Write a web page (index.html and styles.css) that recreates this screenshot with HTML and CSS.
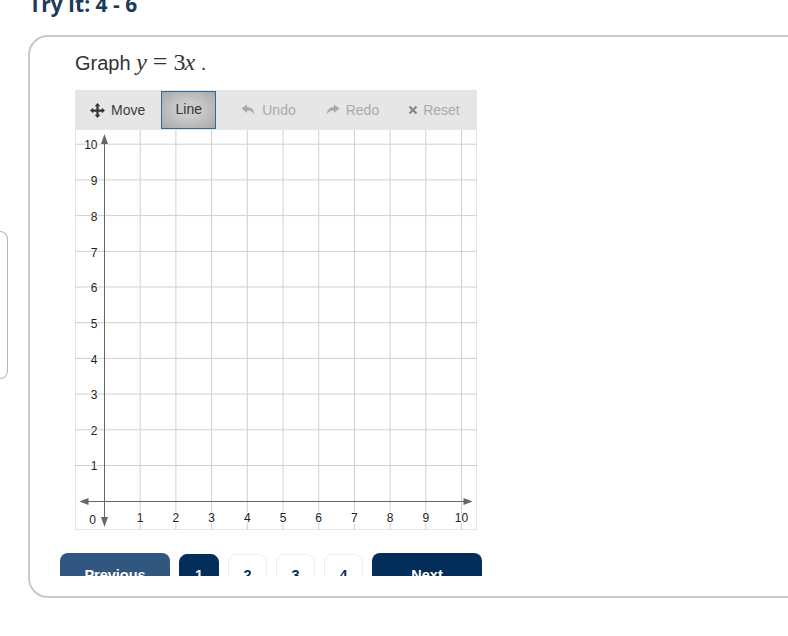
FILE: index.html
```html
<!DOCTYPE html>
<html lang="en">
<head>
<meta charset="utf-8">
<title>Try It: 4 - 6</title>
<link rel="stylesheet" href="styles.css">
</head>
<body>
<h1 class="title">Try It: 4 - 6</h1>
<div class="layout">
  <div class="side-tab"></div>
  <section class="card">
    <p class="prompt">Graph <span class="math"><i>y</i><span class="eq">=</span><span class="three">3</span><i>x</i></span> .</p>
    <div class="toolbar">
      <button class="tool tool-move">
        <svg class="icon" width="15" height="15" viewBox="0 0 16 16"><path d="M8 0 11 3.4H9.2V6.8H12.6V5L16 8 12.6 11V9.2H9.2V12.6H11L8 16 5 12.6H6.8V9.2H3.4V11L0 8 3.4 5V6.8H6.8V3.4H5Z" fill="#333"/></svg>
        Move
      </button>
      <button class="tool tool-line">Line</button>
      <button class="tool tool-undo">
        <svg class="icon" width="14" height="12" viewBox="0 0 14 12"><path d="M0.5 4.5 6 0.5V3C10.5 3 13 6 13.5 10.5 11.8 7.8 9.5 6.6 6 6.6V9Z" fill="#aaa"/></svg>
        Undo
      </button>
      <button class="tool tool-redo">
        <svg class="icon" width="14" height="12" viewBox="0 0 14 12"><path d="M13.5 4.5 8 0.5V3C3.5 3 1 6 0.5 10.5 2.2 7.8 4.5 6.6 8 6.6V9Z" fill="#aaa"/></svg>
        Redo
      </button>
      <button class="tool tool-reset">
        <svg class="icon" width="10" height="10" viewBox="0 0 10 10"><path d="M1.5 1.5 8.5 8.5M8.5 1.5 1.5 8.5" stroke="#888" stroke-width="2.2" fill="none"/></svg>
        Reset
      </button>
    </div>
    <svg class="graph" width="402" height="400" viewBox="0 0 402 400">
      <rect x="0.5" y="-1" width="401" height="400.5" fill="#fff" stroke="#e6e6e6"/>
      <g class="grid">
        <line x1="65.2" y1="0" x2="65.2" y2="400"/><line x1="100.9" y1="0" x2="100.9" y2="400"/><line x1="136.6" y1="0" x2="136.6" y2="400"/><line x1="172.3" y1="0" x2="172.3" y2="400"/><line x1="208" y1="0" x2="208" y2="400"/><line x1="243.7" y1="0" x2="243.7" y2="400"/><line x1="279.4" y1="0" x2="279.4" y2="400"/><line x1="315.1" y1="0" x2="315.1" y2="400"/><line x1="350.8" y1="0" x2="350.8" y2="400"/><line x1="386.5" y1="0" x2="386.5" y2="400"/>
        <line x1="0" y1="335.5" x2="402" y2="335.5"/><line x1="0" y1="299.8" x2="402" y2="299.8"/><line x1="0" y1="264.1" x2="402" y2="264.1"/><line x1="0" y1="228.4" x2="402" y2="228.4"/><line x1="0" y1="192.7" x2="402" y2="192.7"/><line x1="0" y1="157" x2="402" y2="157"/><line x1="0" y1="121.3" x2="402" y2="121.3"/><line x1="0" y1="85.6" x2="402" y2="85.6"/><line x1="0" y1="49.9" x2="402" y2="49.9"/><line x1="0" y1="14.2" x2="402" y2="14.2"/>
      </g>
      <g class="axis">
        <line x1="8" y1="371.5" x2="392" y2="371.5"/>
        <line x1="29.5" y1="8" x2="29.5" y2="392"/>
        <path d="M29.5 4 33 14H26Z"/>
        <path d="M29.5 397 33 387H26Z"/>
        <path d="M4.5 371.5 13.5 368V375Z"/>
        <path d="M397.5 371.5 388.5 368V375Z"/>
      </g>
      <g class="labels xl">
        <text x="65.2" y="391.5">1</text><text x="100.9" y="391.5">2</text><text x="136.6" y="391.5">3</text><text x="172.3" y="391.5">4</text><text x="208" y="391.5">5</text><text x="243.7" y="391.5">6</text><text x="279.4" y="391.5">7</text><text x="315.1" y="391.5">8</text><text x="350.8" y="391.5">9</text><text x="386.5" y="391.5">10</text>
      </g>
      <g class="labels yl">
        <text x="22.5" y="340">1</text><text x="22.5" y="304.5">2</text><text x="22.5" y="268.5">3</text><text x="22.5" y="233.5">4</text><text x="22.5" y="197.5">5</text><text x="22.5" y="161.5">6</text><text x="22.5" y="126.5">7</text><text x="22.5" y="90.5">8</text><text x="22.5" y="54.5">9</text><text x="22.5" y="18.5">10</text><text x="21" y="394">0</text>
      </g>
    </svg>
    <div class="nav-clip">
      <nav class="pager">
        <button class="btn btn-prev">Previous</button>
        <button class="page page-current">1</button>
        <button class="page">2</button>
        <button class="page">3</button>
        <button class="page">4</button>
        <button class="btn btn-next">Next</button>
      </nav>
    </div>
  </section>
</div>
</body>
</html>
```
FILE: styles.css
```css
html, body {
  margin: 0;
  padding: 0;
  height: 636px;
  overflow: hidden;
  background: #fff;
  font-family: "Liberation Sans", Arial, sans-serif;
}
.title {
  margin: -11px 0 0 29px;
  height: 46px;
  font: 700 21px/30px "Open Sans", sans-serif;
  color: #1c3a5a;
}
.layout {
  display: flex;
  align-items: flex-start;
}
.side-tab {
  flex: none;
  box-sizing: border-box;
  width: 8px;
  height: 148px;
  margin-top: 196px;
  border: 1px solid #b5b5b5;
  border-left: none;
  border-radius: 0 10px 10px 0;
}
.card {
  flex: none;
  box-sizing: border-box;
  width: 900px;
  height: 563px;
  margin-left: 20px;
  padding: 13px 0 0 45px;
  border: 2px solid #c9c9c9;
  border-radius: 20px;
}
.prompt {
  margin: 0 0 16px;
  height: 24px;
  font-size: 20px;
  line-height: 24px;
  color: #333;
}
.math {
  font-family: "Liberation Serif", serif;
  font-size: 24px;
}
.eq {
  margin: 0 6px;
  font-size: 26px;
  line-height: 20px;
}
.three { margin-right: -1px; }
.toolbar {
  display: flex;
  align-items: center;
  box-sizing: border-box;
  width: 402px;
  height: 40px;
  background: #e6e6e6;
}
.tool {
  display: flex;
  align-items: center;
  padding: 0;
  border: none;
  background: none;
  font: 14px "Liberation Sans", Arial, sans-serif;
  color: #aaa;
}
.tool-move {
  margin-left: 15px;
  gap: 6px;
  color: #3c3c3c;
}
.tool-line {
  justify-content: center;
  box-sizing: border-box;
  width: 55px;
  height: 38px;
  margin-left: 16px;
  padding-bottom: 3px;
  border: 1px solid #2b6c99;
  background: radial-gradient(ellipse at center, #cbcbcb 30%, #a8a8a8 100%);
  color: #333;
}
.tool-undo { margin-left: 25px; gap: 7px; padding-bottom: 1px; }
.tool-redo { margin-left: 30px; gap: 6px; padding-bottom: 1px; }
.tool-reset { margin-left: 29px; gap: 5px; padding-bottom: 1px; }
.graph { display: block; }
.grid line { stroke: #cfcfcf; stroke-width: 1; }
.axis line { stroke: #666; stroke-width: 1; }
.axis path { fill: #666; }
.labels text {
  font: 12px "Liberation Sans", Arial, sans-serif;
  fill: #222;
  stroke: #fff;
  stroke-width: 2px;
  paint-order: stroke;
}
.xl text { text-anchor: middle; }
.yl text { text-anchor: end; }
.nav-clip {
  height: 23px;
  margin: 23px 0 0 -15px;
  overflow: hidden;
}
.pager {
  display: flex;
  align-items: flex-start;
  gap: 9px;
}
.btn, .page {
  box-sizing: border-box;
  padding: 0;
  border: none;
  font: 700 14.5px "Liberation Sans", Arial, sans-serif;
}
.btn {
  width: 110px;
  height: 43px;
  border-radius: 8px;
  color: #fff;
}
.btn-prev { background: #31567f; }
.btn-next { background: #042e5a; }
.page {
  width: 39px;
  height: 41px;
  margin-top: 1px;
  border: 1px solid #eee;
  border-radius: 8px;
  background: #fff;
  color: #0a2f57;
}
.page-current {
  width: 40px;
  border-color: #042e5a;
  background: #042e5a;
  color: #fff;
}
```
